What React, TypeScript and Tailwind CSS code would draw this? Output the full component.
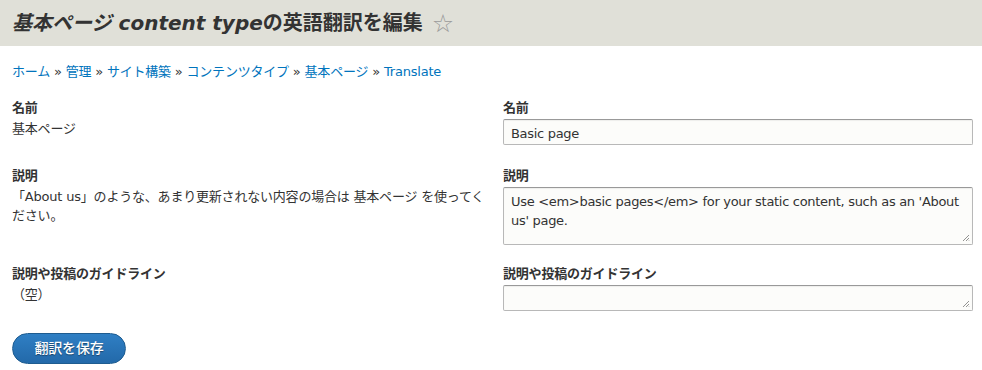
const font = {
  fontFamily: '"DejaVu Sans", "Noto Sans CJK JP", sans-serif',
};

const crumbs = ["ホーム", "管理", "サイト構築", "コンテンツタイプ", "基本ページ", "Translate"];

function Label({ children }: { children: React.ReactNode }) {
  return (
    <div className="text-[13px] leading-[18px] font-bold text-[#333] mb-[2px]">
      {children}
    </div>
  );
}

function Grip() {
  return (
    <svg
      className="absolute right-[2px] bottom-[2px]"
      width="8"
      height="8"
      viewBox="0 0 8 8"
    >
      <path d="M7 1 L1 7 M7 4 L4 7 M7 6.5 L6.5 7" stroke="#777" strokeWidth="0.8" />
    </svg>
  );
}

function Box({
  height,
  children,
  grip,
}: {
  height: string;
  children?: React.ReactNode;
  grip?: boolean;
}) {
  return (
    <div
      className={`relative ${height} border border-[#b8b8b8] border-t-[#999] rounded-[2px] bg-[#fcfcfa] px-[7px] py-[4px] text-[13px] leading-[19px] tracking-[-0.3px] text-[#333] shadow-[inset_0_1px_1px_rgba(0,0,0,0.06)]`}
    >
      {children}
      {grip && <Grip />}
    </div>
  );
}

export default function App() {
  return (
    <div className="min-h-[370px] bg-white text-[#333] tracking-[-0.2px]" style={font}>
      <header className="h-[46px] bg-[#e0e0d8] flex items-center px-[12px]">
        <h1 className="text-[20px] font-bold text-[#333] flex items-center tracking-normal">
          <em className="italic">基本ページ content type</em>
          <span>の英語翻訳を編集</span>
          <span className="ml-[9px] text-[25px] font-normal text-[#9a9a9a] leading-none">☆</span>
        </h1>
      </header>

      <nav className="mt-[17px] px-[12px] text-[13px] leading-[18px]">
        {crumbs.map((c, i) => (
          <span key={c}>
            <a className="text-[#0074bd] cursor-pointer">{c}</a>
            {i < crumbs.length - 1 && <span className="text-[#333]"> » </span>}
          </span>
        ))}
      </nav>

      <main className="mt-[18px] px-[12px] grid grid-cols-[479px_470px] gap-x-[12px]">
        <div>
          <Label>名前</Label>
          <div className="text-[13px] leading-[20px]">基本ページ</div>
        </div>
        <div>
          <Label>名前</Label>
          <Box height="h-[26px]">Basic page</Box>
        </div>

        <div className="mt-[22px]">
          <Label>説明</Label>
          <div className="text-[13px] leading-[19px]">
            「About us」のような、あまり更新されない内容の場合は 基本ページ を使ってください。
          </div>
        </div>
        <div className="mt-[22px]">
          <Label>説明</Label>
          <Box height="h-[58px]" grip>
            Use &lt;em&gt;basic pages&lt;/em&gt; for your static content, such as an 'About us' page.
          </Box>
        </div>

        <div className="mt-[20px]">
          <Label>説明や投稿のガイドライン</Label>
          <div className="text-[13px] leading-[20px]">（空）</div>
        </div>
        <div className="mt-[20px]">
          <Label>説明や投稿のガイドライン</Label>
          <Box height="h-[26px]" grip />
        </div>
      </main>

      <div className="px-[12px] mt-[22px]">
        <button className="w-[114px] h-[31px] rounded-full border border-[#1e5c90] bg-gradient-to-b from-[#2f7fc4] to-[#2369a9] text-white text-[14px] font-medium [text-shadow:0_1px_1px_rgba(0,0,0,0.4)]">
          翻訳を保存
        </button>
      </div>
    </div>
  );
}
